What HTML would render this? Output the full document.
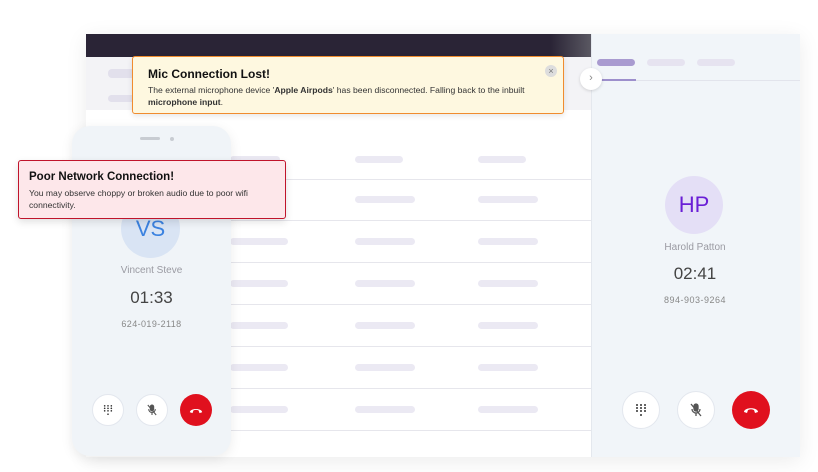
<!DOCTYPE html><html><head><style>
*{margin:0;padding:0;box-sizing:border-box}
body{width:818px;height:472px;background:#fff;font-family:"Liberation Sans",sans-serif;position:relative;overflow:hidden}
.a{position:absolute}
.pill{position:absolute;height:7px;border-radius:4px;background:#ebe9f3}
.line{position:absolute;height:1px;background:#e6e6ec}
.btn{position:absolute;border-radius:50%;background:#fff;border:1px solid #e3e7ee;display:flex;align-items:center;justify-content:center}
.red{background:#e0101e;border:none}
</style></head><body>
<div class="a" style="left:86px;top:34px;width:714px;height:423px;background:#fff;box-shadow:0 4px 20px rgba(0,0,0,.08)"></div>
<div class="a" style="left:86px;top:34px;width:505px;height:23px;background:linear-gradient(90deg,#2a2436,#2a2436 92%,#5a5862)"></div>
<div class="a" style="left:86px;top:57px;width:505px;height:53px;background:#f3f3f6"></div>
<div class="pill" style="left:108px;top:69px;width:30px;height:9px;background:#e2e0ec"></div>
<div class="pill" style="left:108px;top:95px;width:30px;background:#e2e0ec"></div>
<div class="pill" style="left:230px;top:156px;width:50px"></div>
<div class="pill" style="left:355px;top:156px;width:48px"></div>
<div class="pill" style="left:478px;top:156px;width:48px"></div>
<div class="line" style="left:86px;top:179px;width:505px"></div>
<div class="line" style="left:86px;top:220px;width:505px"></div>
<div class="line" style="left:86px;top:262px;width:505px"></div>
<div class="line" style="left:86px;top:304px;width:505px"></div>
<div class="line" style="left:86px;top:346px;width:505px"></div>
<div class="line" style="left:86px;top:388px;width:505px"></div>
<div class="line" style="left:86px;top:430px;width:505px"></div>
<div class="pill" style="left:355px;top:196px;width:60px"></div><div class="pill" style="left:478px;top:196px;width:60px"></div>
<div class="pill" style="left:230px;top:238px;width:58px"></div><div class="pill" style="left:355px;top:238px;width:60px"></div><div class="pill" style="left:478px;top:238px;width:60px"></div>
<div class="pill" style="left:230px;top:280px;width:58px"></div><div class="pill" style="left:355px;top:280px;width:60px"></div><div class="pill" style="left:478px;top:280px;width:60px"></div>
<div class="pill" style="left:230px;top:322px;width:58px"></div><div class="pill" style="left:355px;top:322px;width:60px"></div><div class="pill" style="left:478px;top:322px;width:60px"></div>
<div class="pill" style="left:230px;top:364px;width:58px"></div><div class="pill" style="left:355px;top:364px;width:60px"></div><div class="pill" style="left:478px;top:364px;width:60px"></div>
<div class="pill" style="left:230px;top:406px;width:58px"></div><div class="pill" style="left:355px;top:406px;width:60px"></div><div class="pill" style="left:478px;top:406px;width:60px"></div>

<div class="a" style="left:591px;top:34px;width:209px;height:423px;background:#f1f5f9;border-left:1px solid #e4e8ee"></div>
<div class="pill" style="left:597px;top:59px;width:38px;height:7px;background:#a99bd0"></div>
<div class="pill" style="left:647px;top:59px;width:38px;height:7px;background:#e6e3f0"></div>
<div class="pill" style="left:697px;top:59px;width:38px;height:7px;background:#e6e3f0"></div>
<div class="a" style="left:592px;top:80px;width:208px;height:1px;background:#e2e4ec"></div>
<div class="a" style="left:597px;top:79px;width:39px;height:2px;background:#9d8fcc"></div>
<div class="a" style="left:580px;top:68px;width:22px;height:22px;border-radius:50%;background:#fff;box-shadow:0 1px 3px rgba(0,0,0,.15);color:#888;font-size:11px;text-align:center;line-height:21px">›</div>
<div class="a" style="left:665px;top:176px;width:58px;height:58px;border-radius:50%;background:#e4dff6;color:#6a1fd6;font-size:22px;text-align:center;line-height:58px">HP</div>
<div class="a" style="left:600px;top:242px;width:190px;text-align:center;color:#9a9aa2;font-size:10px">Harold Patton</div>
<div class="a" style="left:600px;top:264px;width:190px;text-align:center;color:#444;font-size:17px">02:41</div>
<div class="a" style="left:600px;top:295px;width:190px;text-align:center;color:#888;font-size:9px;letter-spacing:.5px">894-903-9264</div>
<div class="btn" style="left:622px;top:391px;width:38px;height:38px"><svg width="12" height="14" viewBox="0 0 12 14" fill="#333"><circle cx="2" cy="2" r="1"/><circle cx="6" cy="2" r="1"/><circle cx="10" cy="2" r="1"/><circle cx="2" cy="5" r="1"/><circle cx="6" cy="5" r="1"/><circle cx="10" cy="5" r="1"/><circle cx="2" cy="8" r="1"/><circle cx="6" cy="8" r="1"/><circle cx="10" cy="8" r="1"/><circle cx="6" cy="12" r="1"/></svg></div>
<div class="btn" style="left:677px;top:391px;width:38px;height:38px"><svg width="12" height="14" viewBox="0 0 12 14" fill="none" stroke="#555" stroke-width="1.3"><rect x="4" y="1" width="4" height="7" rx="2" fill="#555"/><path d="M2 6a4 4 0 008 0M6 10v3M1 1l10 12"/></svg></div>
<div class="btn red" style="left:732px;top:391px;width:38px;height:38px"><svg width="16" height="8" viewBox="0 0 16 8"><path d="M1 6c0-5 14-5 14 0l-3 1-1-3c-2-1-4-1-6 0l-1 3z" fill="#fff"/></svg></div>

<div class="a" style="left:72px;top:126px;width:159px;height:330px;border-radius:18px;background:#f0f4f8;box-shadow:0 3px 12px rgba(0,0,0,.08)"></div>
<div class="a" style="left:140px;top:137px;width:20px;height:3px;border-radius:2px;background:#c8ccd2"></div>
<div class="a" style="left:170px;top:137px;width:4px;height:4px;border-radius:50%;background:#c8ccd2"></div>
<div class="a" style="left:121px;top:199px;width:59px;height:59px;border-radius:50%;background:#d9e4f4;color:#3b82e0;font-size:22px;text-align:center;line-height:59px">VS</div>
<div class="a" style="left:72px;top:265px;width:159px;text-align:center;color:#9a9aa2;font-size:10px">Vincent Steve</div>
<div class="a" style="left:72px;top:288px;width:159px;text-align:center;color:#444;font-size:17px">01:33</div>
<div class="a" style="left:72px;top:319px;width:159px;text-align:center;color:#888;font-size:9px;letter-spacing:.4px">624-019-2118</div>
<div class="btn" style="left:92px;top:394px;width:32px;height:32px"><svg width="10" height="12" viewBox="0 0 12 14" fill="#333"><circle cx="2" cy="2" r="1"/><circle cx="6" cy="2" r="1"/><circle cx="10" cy="2" r="1"/><circle cx="2" cy="5" r="1"/><circle cx="6" cy="5" r="1"/><circle cx="10" cy="5" r="1"/><circle cx="2" cy="8" r="1"/><circle cx="6" cy="8" r="1"/><circle cx="10" cy="8" r="1"/><circle cx="6" cy="12" r="1"/></svg></div>
<div class="btn" style="left:136px;top:394px;width:32px;height:32px"><svg width="10" height="12" viewBox="0 0 12 14" fill="none" stroke="#555" stroke-width="1.3"><rect x="4" y="1" width="4" height="7" rx="2" fill="#555"/><path d="M2 6a4 4 0 008 0M6 10v3M1 1l10 12"/></svg></div>
<div class="btn red" style="left:180px;top:394px;width:32px;height:32px"><svg width="14" height="7" viewBox="0 0 16 8"><path d="M1 6c0-5 14-5 14 0l-3 1-1-3c-2-1-4-1-6 0l-1 3z" fill="#fff"/></svg></div>

<div class="a" style="left:132px;top:56px;width:432px;height:58px;background:#fef8e0;border:1px solid #f08c2e;border-radius:3px;box-shadow:0 2px 6px rgba(0,0,0,.1)">
<div class="a" style="left:15px;top:10px;font-size:12px;color:#111;font-weight:bold">Mic Connection Lost!</div>
<div class="a" style="left:15px;top:28px;width:405px;font-size:8.6px;line-height:11.5px;color:#333">The external microphone device '<b>Apple Airpods</b>' has been disconnected. Falling back to the inbuilt <b>microphone input</b>.</div>
<div class="a" style="left:412px;top:8px;width:12px;height:12px;border-radius:50%;background:#ddd;color:#777;font-size:9px;text-align:center;line-height:12px">×</div>
</div>
<div class="a" style="left:18px;top:160px;width:268px;height:59px;background:#fde7ea;border:1px solid #c0142b;border-radius:3px;box-shadow:0 3px 8px rgba(0,0,0,.12)">
<div class="a" style="left:10px;top:10px;font-size:11.5px;color:#111;font-weight:bold">Poor Network Connection!</div>
<div class="a" style="left:10px;top:27px;width:250px;font-size:8.6px;line-height:11.5px;color:#333">You may observe choppy or broken audio due to poor wifi connectivity.</div>
</div>
</body></html>
